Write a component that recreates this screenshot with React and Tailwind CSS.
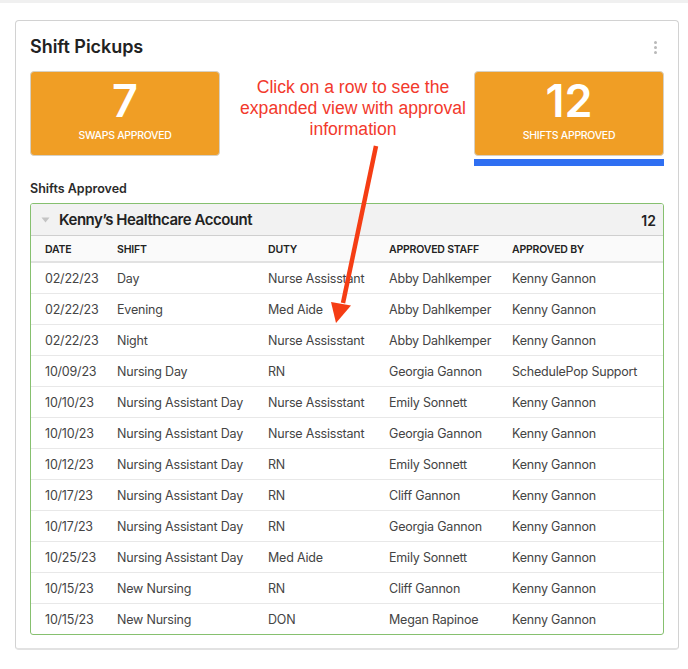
const rows = [
  ["02/22/23", "Day", "Nurse Assisstant", "Abby Dahlkemper", "Kenny Gannon"],
  ["02/22/23", "Evening", "Med Aide", "Abby Dahlkemper", "Kenny Gannon"],
  ["02/22/23", "Night", "Nurse Assisstant", "Abby Dahlkemper", "Kenny Gannon"],
  ["10/09/23", "Nursing Day", "RN", "Georgia Gannon", "SchedulePop Support"],
  ["10/10/23", "Nursing Assistant Day", "Nurse Assisstant", "Emily Sonnett", "Kenny Gannon"],
  ["10/10/23", "Nursing Assistant Day", "Nurse Assisstant", "Georgia Gannon", "Kenny Gannon"],
  ["10/12/23", "Nursing Assistant Day", "RN", "Emily Sonnett", "Kenny Gannon"],
  ["10/17/23", "Nursing Assistant Day", "RN", "Cliff Gannon", "Kenny Gannon"],
  ["10/17/23", "Nursing Assistant Day", "RN", "Georgia Gannon", "Kenny Gannon"],
  ["10/25/23", "Nursing Assistant Day", "Med Aide", "Emily Sonnett", "Kenny Gannon"],
  ["10/15/23", "New Nursing", "RN", "Cliff Gannon", "Kenny Gannon"],
  ["10/15/23", "New Nursing", "DON", "Megan Rapinoe", "Kenny Gannon"],
];

const headers = ["DATE", "SHIFT", "DUTY", "APPROVED STAFF", "APPROVED BY"];

function Tile({ value, label }) {
  return (
    <div className="flex h-[85px] w-[190px] flex-col items-center rounded-[4px] border border-[#d6d0c4] bg-[#f09e25] text-white">
      <div className="mt-[1px] text-[45px] leading-[56px] font-semibold">{value}</div>
      <div className="text-[10.5px] leading-[14px] font-medium tracking-[-0.3px]">{label}</div>
    </div>
  );
}

export default function App() {
  return (
    <div className="h-[669px] w-[688px] bg-white font-['Inter',sans-serif]">
      <div className="h-[3px] bg-[#f0f0f0]" />
      <div className="relative mt-[17px] ml-[15px] h-[630px] w-[664px] rounded-[4px] border border-[#d2d2d2] border-b-2 border-b-[#e2e2e2] px-[14px] pt-[15px]">
        <div className="flex h-[22px] items-center justify-between">
          <h1 className="text-[18px] leading-[22px] font-semibold tracking-[-0.05px] text-[#222]">Shift Pickups</h1>
          <div className="mr-[7px] flex flex-col gap-[2px]">
            <span className="h-[3px] w-[3px] rounded-full bg-[#b9b9b9]" />
            <span className="h-[3px] w-[3px] rounded-full bg-[#b9b9b9]" />
            <span className="h-[3px] w-[3px] rounded-full bg-[#b9b9b9]" />
          </div>
        </div>

        <div className="mt-[13px] flex items-start">
          <Tile value="7" label="SWAPS APPROVED" />
          <div className="w-[254px] pt-[6px] pl-[12px] text-center font-['Liberation_Sans',sans-serif] text-[17.6px] leading-[21px] text-[#f2392c]">
            Click on a row to see the<br />expanded view with approval<br />information
          </div>
          <div className="w-[190px]">
            <Tile value="12" label="SHIFTS APPROVED" />
            <div className="mt-[3px] h-[7px] bg-[#2f6ff2]" />
          </div>
        </div>

        <div className="mt-[15px] text-[12.5px] leading-[16px] font-semibold text-[#2b2b2b]">Shifts Approved</div>

        <div className="mt-[6px] overflow-hidden rounded-[3px] border border-[#86c06f]">
          <div className="flex h-[32px] items-center border-b border-[#cfcfcf] bg-[#f2f2f2] pt-[1px] pr-[7px] pl-[10px] text-[#222]">
            <svg width="9" height="6" viewBox="0 0 9 6" className="mr-[9px]">
              <path d="M0.5 0.5H8.5L4.5 5.5Z" fill="#c4c4c4" />
            </svg>
            <span className="flex-1 text-[15px] font-semibold tracking-[-0.47px]">Kenny’s Healthcare Account</span>
            <span className="text-[14px] font-semibold">12</span>
          </div>

          <div className="grid h-[27px] grid-cols-[72px_151px_121px_123px_1fr] items-center border-b-2 border-[#e2e2e2] bg-[#fafafa] pt-[2px] pl-[14px] text-[10.5px] font-semibold tracking-[-0.2px] text-[#222]">
            {headers.map((h) => (
              <div key={h}>{h}</div>
            ))}
          </div>

          {rows.map((row, i) => (
            <div
              key={i}
              className="grid h-[31px] grid-cols-[72px_151px_121px_123px_1fr] items-center border-b border-[#e8e8e8] pt-[2px] pl-[14px] text-[12.5px] tracking-[-0.2px] text-[#444] last:h-[30px] last:border-b-0"
            >
              {row.map((cell, j) => (
                <div key={j} className="whitespace-nowrap">{cell}</div>
              ))}
            </div>
          ))}
        </div>

        <svg className="absolute top-[124px] left-[310px]" width="60" height="184" viewBox="0 0 60 184">
          <path d="M50 1 L17 158" stroke="#f53d14" strokeWidth="4.5" fill="none" />
          <path d="M5 157 L25 160.5 L10 178 Z" fill="#f53d14" />
        </svg>
      </div>
    </div>
  );
}
